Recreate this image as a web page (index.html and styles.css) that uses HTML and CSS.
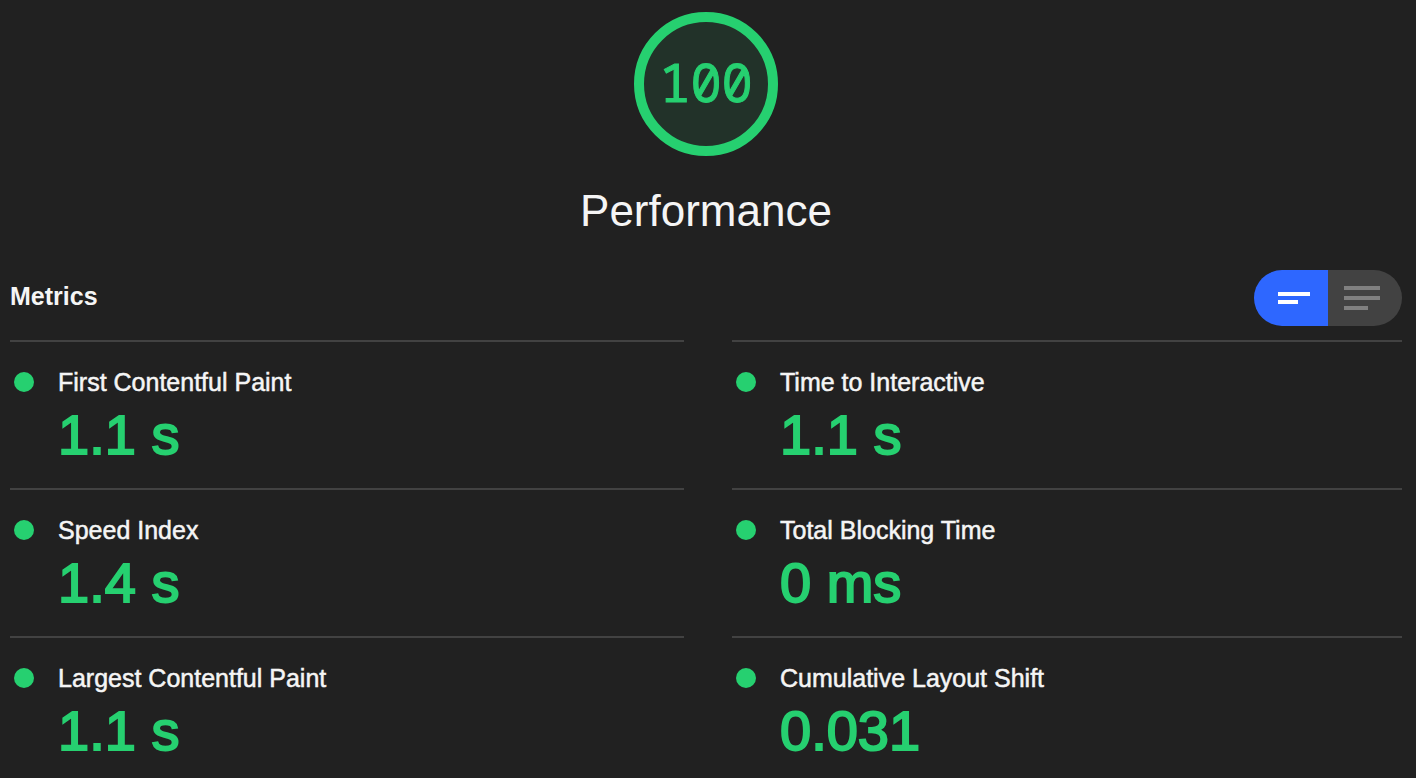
FILE: index.html
```html
<!DOCTYPE html>
<html lang="en">
<head>
<meta charset="utf-8">
<title>Performance</title>
<link rel="stylesheet" href="styles.css">
</head>
<body>
<main class="report">
  <header class="category">
    <div class="gauge"><span class="gauge-score">100</span></div>
    <h1 class="category-title">Performance</h1>
  </header>
  <section class="metrics">
    <div class="metrics-header">
      <h2 class="metrics-title">Metrics</h2>
      <div class="toggle" role="group" aria-label="Metric details">
        <button class="toggle-button toggle-button-active" type="button" aria-label="Compact view" aria-pressed="true">
          <svg class="toggle-icon" width="48" height="48" viewBox="0 0 48 48" aria-hidden="true"><path fill="currentColor" d="M8 18h32v4H8zM8 26h20v4H8z"/></svg>
        </button>
        <button class="toggle-button" type="button" aria-label="Expanded view" aria-pressed="false">
          <svg class="toggle-icon" width="48" height="48" viewBox="0 0 48 48" aria-hidden="true"><path fill="currentColor" d="M6 12h36v4H6zM6 22h36v4H6zM6 32h24v4H6z"/></svg>
        </button>
      </div>
    </div>
    <div class="metrics-grid">
      <article class="metric"><h3 class="metric-name">First Contentful Paint</h3><p class="metric-value">1.1 s</p></article>
      <article class="metric"><h3 class="metric-name">Time to Interactive</h3><p class="metric-value">1.1 s</p></article>
      <article class="metric"><h3 class="metric-name">Speed Index</h3><p class="metric-value">1.4 s</p></article>
      <article class="metric"><h3 class="metric-name">Total Blocking Time</h3><p class="metric-value">0 ms</p></article>
      <article class="metric"><h3 class="metric-name">Largest Contentful Paint</h3><p class="metric-value">1.1 s</p></article>
      <article class="metric"><h3 class="metric-name">Cumulative Layout Shift</h3><p class="metric-value">0.031</p></article>
    </div>
  </section>
</main>
</body>
</html>
```
FILE: styles.css
```css
* {
  box-sizing: border-box;
}

body,
h1,
h2,
h3,
p {
  margin: 0;
}

body {
  background: #212121;
  color: #f5f5f5;
  font-family: "Liberation Sans", Arial, sans-serif;
}

.report {
  padding: 12px 14px 0 10px;
}

.category {
  display: flex;
  flex-direction: column;
  align-items: center;
  gap: 28px;
}

.gauge {
  display: flex;
  align-items: center;
  justify-content: center;
  width: 144px;
  height: 144px;
  padding-bottom: 4px;
  border: 10px solid #26d070;
  border-radius: 50%;
  background: #223229;
}

.gauge-score {
  color: #26d070;
  font-family: "Noto Sans Mono", "DejaVu Sans Mono", monospace;
  font-size: 52px;
  line-height: 56px;
  -webkit-text-stroke: 1px currentColor;
}

.category-title {
  font-size: 44px;
  font-weight: 400;
  line-height: 54px;
}

.metrics-header {
  display: flex;
  align-items: center;
  justify-content: space-between;
  padding: 32px 0 14px;
}

.metrics-title {
  font-size: 25px;
  font-weight: 700;
  line-height: 32px;
  padding-bottom: 4px;
}

.toggle {
  display: flex;
  overflow: hidden;
  border-radius: 28px;
}

.toggle-button {
  display: flex;
  align-items: center;
  justify-content: flex-start;
  width: 74px;
  height: 56px;
  padding: 0 10px;
  border: 0;
  background: #424242;
  color: #808080;
}

.toggle-button-active {
  justify-content: flex-end;
  background: #2e67ff;
  color: #fff;
}

.toggle-icon {
  flex: none;
}

.metrics-grid {
  display: grid;
  grid-template-columns: calc(50% - 22px) 1fr;
  column-gap: 48px;
}

.metric {
  padding: 24px 0 20px;
  border-top: 2px solid #424242;
}

.metric-name {
  display: flex;
  align-items: center;
  gap: 24px;
  padding-left: 4px;
  font-size: 25px;
  font-weight: 400;
  line-height: 32px;
  -webkit-text-stroke: 0.02em currentColor;
}

.metric-name::before {
  content: "";
  width: 20px;
  height: 20px;
  border-radius: 50%;
  background: #26d070;
}

.metric-value {
  padding: 5px 0 1px 48px;
  color: #26d070;
  font-size: 56px;
  font-weight: 400;
  line-height: 64px;
  -webkit-text-stroke: 2px currentColor;
}
```
